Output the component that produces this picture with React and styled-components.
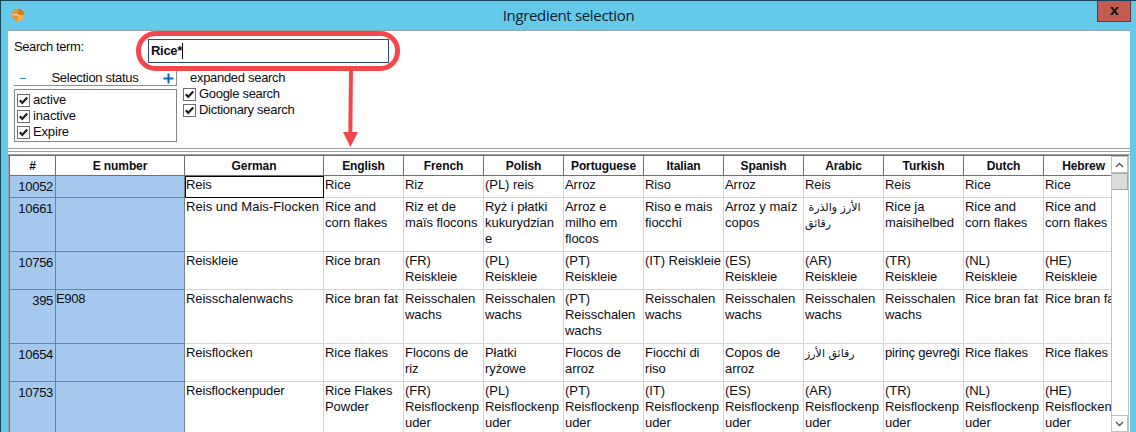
import React, { useState } from "react";
import styled, { createGlobalStyle } from "styled-components";

const GlobalStyle = createGlobalStyle`
  *,
  *::before {
    box-sizing: border-box;
  }
  body {
    margin: 0;
    overflow: hidden;
    font-family: "Liberation Sans", Arial, sans-serif;
    font-size: 13px;
    line-height: 16px;
    color: #0c0c14;
  }
`;

const Window = styled.div`
  position: relative;
  width: 1136px;
  height: 432px;
  overflow: hidden;
  display: flex;
  flex-direction: column;
  background: #65caea;
  border-top: 1px solid #17445a;
  border-left: 1px solid #17445a;
`;
const TitleBar = styled.header`
  height: 29px;
  flex: none;
  display: grid;
  grid-template-columns: 60px 1fr 60px;
  align-items: start;
`;
const Logo = styled.svg`
  display: block;
  margin: 7px 0 0 10px;
`;
const Title = styled.h1`
  margin: 2px 0 0;
  text-align: center;
  font-family: "Open Sans", sans-serif;
  font-size: 15px;
  line-height: 24px;
  font-weight: 400;
  letter-spacing: -0.33px;
  color: #10202a;
`;
const CloseButton = styled.button`
  width: 34px;
  height: 21px;
  margin-left: 21px;
  padding: 0;
  display: flex;
  align-items: center;
  justify-content: center;
  background: #c35b50;
  border: 1px solid #5f3a42;
  border-top: none;
`;
const Content = styled.main`
  flex: 1;
  min-height: 0;
  margin: 0 6px 0 7px;
  display: flex;
  flex-direction: column;
  background: #fff;
  border-top: 1px solid #8fa6ad;
`;

const SearchPanel = styled.section`
  height: 117px;
  flex: none;
  padding-left: 6px;
  letter-spacing: -0.3px;
`;
const SearchRow = styled.div`
  display: flex;
  height: 40px;
  padding-top: 8px;
`;
const SearchLabel = styled.label`
  width: 134px;
  letter-spacing: -0.4px;
`;
const SearchInput = styled.div`
  width: 241px;
  height: 24px;
  padding: 3px 2px;
  display: flex;
  font-weight: 700;
  border: 1px solid #2a4c70;
`;
const Caret = styled.span`
  width: 1px;
  height: 16px;
  background: #000;
`;
const Filters = styled.div`
  display: flex;
`;
const StatusFilter = styled.div`
  width: 163px;
`;
const StatusHeader = styled.div`
  height: 15px;
  display: flex;
  align-items: center;
  justify-content: space-between;
  padding: 0 2px 0 6px;
  border-right: 1px solid #909090;
  border-bottom: 1px solid #909090;
`;
const StatusList = styled.div`
  height: 53px;
  margin-top: 3px;
  padding: 2px;
  letter-spacing: -0.15px;
  border: 1px solid #858585;
`;
const Expanded = styled.div`
  padding-left: 6px;
`;
const ExpandedTitle = styled.div`
  padding-left: 7px;
  height: 15px;
  line-height: 14px;
`;
const CheckRow = styled.label`
  height: 16px;
  display: flex;
  align-items: center;
  gap: 3px;
`;
const CheckBox = styled.span`
  width: 13px;
  height: 13px;
  display: flex;
  border: 1px solid #707070;
`;

const Splitter = styled.div`
  height: 7px;
  flex: none;
  border-top: 1px solid #a0a0a0;
  border-bottom: 1px solid #a0a0a0;
  &::before {
    content: "";
    display: block;
    height: 3px;
    border-bottom: 1px solid #a0a0a0;
  }
`;
const TableArea = styled.section`
  flex: 1;
  min-height: 0;
  margin-right: 1px;
  display: flex;
  border-top: 1px solid #6f6f6f;
  border-left: 1px solid #a0a0a0;
  border-right: 1px solid #c4c4c4;
`;
const Grid = styled.div`
  width: 1102px;
  flex: none;
  overflow: hidden;
  border-left: 1px solid #707070;
`;
const Row = styled.div`
  display: grid;
  grid-template-columns: 46px 129px 139px repeat(10, 80px);
  width: 1114px;
  height: ${(p) => p.$height}px;
`;
const HeaderCell = styled.div`
  text-align: center;
  font-weight: 700;
  font-size: 12px;
  line-height: 20px;
  letter-spacing: -0.1px;
  height: 20px;
  border-right: 1px solid #707070;
  border-bottom: 1px solid #707070;
`;
const Cell = styled.div`
  padding: 1px 0 0 1px;
  white-space: pre;
  overflow: hidden;
  letter-spacing: ${(p) => p.$spacing || "-0.05px"};
  border-right: 1px solid #d4d4d4;
  border-bottom: 1px solid #d4d4d4;
  outline: ${(p) => (p.$active ? "1px solid #000" : "none")};
  outline-offset: -1px;
`;
const KeyCell = styled(Cell)`
  padding: ${(p) => (p.$number ? "3px 2px 0 0" : "1px 0 0 0")};
  text-align: ${(p) => (p.$number ? "right" : "left")};
  letter-spacing: -0.3px;
  background: #a5c8ee;
  border-color: #7b8085;
`;
const ArabicText = styled.span`
  display: block;
  padding-top: 1px;
  font-family: "DejaVu Sans", sans-serif;
  font-size: 11px;
  letter-spacing: 0;
`;
const ScrollBar = styled.div`
  width: 17px;
  display: flex;
  flex-direction: column;
  border-left: 1px solid #c0c0c0;
`;
const ScrollButton = styled.div`
  height: 17px;
  flex: none;
  display: flex;
  align-items: center;
  justify-content: center;
  border: 1px solid #c0c0c0;
  border-left: none;
`;
const Thumb = styled.div`
  height: 17px;
  background: #dcdcdc;
  border: 1px solid #a8a8a8;
  border-left: none;
`;
const Track = styled.div`
  flex: 1;
`;
const Callout = styled.svg`
  position: absolute;
  left: 134px;
  top: 28px;
  pointer-events: none;
`;

const columns = [
  "#", "E number", "German", "English", "French", "Polish", "Portuguese",
  "Italian", "Spanish", "Arabic", "Turkish", "Dutch", "Hebrew",
];

const rows = [
  {
    height: 22,
    cells: ["10052", "", "Reis", "Rice", "Riz", "(PL) reis", "Arroz", "Riso", "Arroz", "Reis", "Reis", "Rice", "Rice"],
  },
  {
    height: 54,
    cells: [
      "10661", "", "Reis und Mais-Flocken", "Rice and\ncorn flakes", "Riz et de\nmaïs flocons",
      "Ryż i płatki\nkukurydzian\ne", "Arroz e\nmilho em\nflocos", "Riso e mais\nfiocchi",
      "Arroz y maíz\ncopos", " الأرز والذرة\nرقائق", "Rice ja\nmaisihelbed",
      "Rice and\ncorn flakes", "Rice and\ncorn flakes",
    ],
  },
  {
    height: 38,
    cells: [
      "10756", "", "Reiskleie", "Rice bran", "(FR)\nReiskleie", "(PL)\nReiskleie", "(PT)\nReiskleie",
      "(IT) Reiskleie", "(ES)\nReiskleie", "(AR)\nReiskleie", "(TR)\nReiskleie", "(NL)\nReiskleie", "(HE)\nReiskleie",
    ],
  },
  {
    height: 54,
    cells: [
      "395", "E908", "Reisschalenwachs", "Rice bran fat", "Reisschalen\nwachs", "Reisschalen\nwachs",
      "(PT)\nReisschalen\nwachs", "Reisschalen\nwachs", "Reisschalen\nwachs", "Reisschalen\nwachs",
      "Reisschalen\nwachs", "Rice bran fat", "Rice bran fat",
    ],
  },
  {
    height: 38,
    cells: [
      "10654", "", "Reisflocken", "Rice flakes", "Flocons de\nriz", "Płatki\nryżowe", "Flocos de\narroz",
      "Fiocchi di\nriso", "Copos de\narroz", "رقائق الأرز", "pirinç gevreği", "Rice flakes", "Rice flakes",
    ],
  },
  {
    height: 54,
    cells: [
      "10753", "", "Reisflockenpuder", "Rice Flakes\nPowder", "(FR)\nReisflockenp\nuder", "(PL)\nReisflockenp\nuder",
      "(PT)\nReisflockenp\nuder", "(IT)\nReisflockenp\nuder", "(ES)\nReisflockenp\nuder", "(AR)\nReisflockenp\nuder",
      "(TR)\nReisflockenp\nuder", "(NL)\nReisflockenp\nuder", "(HE)\nReisflockenp\nuder",
    ],
  },
];

const tracking = {
  "Reis und Mais-Flocken": "0.04px",
  "pirinç gevreği": "-0.2px",
  Reisflockenpuder: "-0.12px",
};

const isArabic = (text) => /[\u0600-\u06ff]/.test(text);

function Check({ label, checked, onToggle }) {
  return (
    <CheckRow onClick={onToggle}>
      <CheckBox>
        {checked && (
          <svg width="11" height="11" viewBox="0 0 11 11">
            <path d="M1.8 5.2 L4.3 7.9 L9.2 2.4" fill="none" stroke="#1c1c1c" strokeWidth="2.2" />
          </svg>
        )}
      </CheckBox>
      {label}
    </CheckRow>
  );
}

function TableRow({ row, active }) {
  return (
    <Row $height={row.height}>
      {row.cells.map((text, i) => {
        if (i < 2) {
          return (
            <KeyCell key={i} $number={i === 0}>
              {text}
            </KeyCell>
          );
        }
        return (
          <Cell key={i} $active={active && i === 2} $spacing={tracking[text]}>
            {isArabic(text) ? <ArabicText>{text}</ArabicText> : text}
          </Cell>
        );
      })}
    </Row>
  );
}

function App() {
  const [checks, setChecks] = useState({
    active: true,
    inactive: true,
    Expire: true,
    "Google search": true,
    "Dictionary search": true,
  });

  function renderCheck(name) {
    return (
      <Check
        key={name}
        label={name}
        checked={checks[name]}
        onToggle={() => setChecks({ ...checks, [name]: !checks[name] })}
      />
    );
  }

  return (
    <Window>
      <GlobalStyle />
      <TitleBar>
        <Logo width="14" height="14" viewBox="0 0 14 14">
          <circle cx="7" cy="7" r="6.2" fill="#e8952c" />
          <path d="M7 7 V0.8 A6.2 6.2 0 0 1 13.2 7 Z" fill="#d97b16" />
          <path d="M7 7 H13.2 A6.2 6.2 0 0 1 7 13.2 Z" fill="#f0b050" />
          <path d="M1.5 6.8 H7 L9 8.5" fill="none" stroke="#fbe3c0" strokeWidth="1" />
        </Logo>
        <Title>Ingredient selection</Title>
        <CloseButton>
          <svg width="9" height="8" viewBox="0 0 10 9">
            <path d="M0.5 0.8 H3 M7 0.8 H9.5 M0.5 8.2 H3 M7 8.2 H9.5" stroke="#111" strokeWidth="1.4" />
            <path d="M2 1 L8 8 M8 1 L2 8" stroke="#111" strokeWidth="2" />
          </svg>
        </CloseButton>
      </TitleBar>
      <Content>
        <SearchPanel>
          <SearchRow>
            <SearchLabel>Search term:</SearchLabel>
            <SearchInput>
              Rice*
              <Caret />
            </SearchInput>
          </SearchRow>
          <Filters>
            <StatusFilter>
              <StatusHeader>
                <svg width="7" height="10">
                  <path d="M0 5.5 H6" stroke="#2f8fb0" />
                </svg>
                <span>Selection status</span>
                <svg width="11" height="11">
                  <path d="M0.5 5.5 H10.5 M5.5 0.5 V10.5" stroke="#0a66c2" strokeWidth="2" />
                </svg>
              </StatusHeader>
              <StatusList>{["active", "inactive", "Expire"].map(renderCheck)}</StatusList>
            </StatusFilter>
            <Expanded>
              <ExpandedTitle>expanded search</ExpandedTitle>
              {["Google search", "Dictionary search"].map(renderCheck)}
            </Expanded>
          </Filters>
        </SearchPanel>
        <Splitter />
        <TableArea>
          <Grid>
            <Row $height={20}>
              {columns.map((name) => (
                <HeaderCell key={name}>{name}</HeaderCell>
              ))}
            </Row>
            {rows.map((row, i) => (
              <TableRow key={row.cells[0]} row={row} active={i === 0} />
            ))}
          </Grid>
          <ScrollBar>
            <ScrollButton>
              <svg width="9" height="6">
                <path d="M1 5 L4.5 1.5 L8 5" fill="none" stroke="#555" strokeWidth="1.4" />
              </svg>
            </ScrollButton>
            <Thumb />
            <Track />
            <ScrollButton>
              <svg width="9" height="6">
                <path d="M1 1 L4.5 4.5 L8 1" fill="none" stroke="#555" strokeWidth="1.4" />
              </svg>
            </ScrollButton>
          </ScrollBar>
        </TableArea>
      </Content>
      <Callout width="270" height="122" viewBox="135 29 270 122">
        <rect x="138.5" y="33.5" width="259" height="35" rx="17" fill="none" stroke="#f4474b" strokeWidth="5" />
        <path d="M351 70 L350.3 134" stroke="#f4474b" strokeWidth="4" />
        <path d="M343 132 H358 L350.3 147 Z" fill="#f4474b" />
      </Callout>
    </Window>
  );
}

export default App;
